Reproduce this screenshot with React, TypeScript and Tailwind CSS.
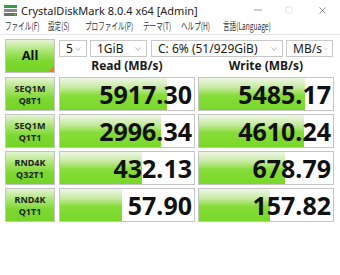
import { ChevronDown, Minus, Square, X } from "lucide-react";

const ROWS: { top: string; bottom: string; read: string; write: string; readPct: number; writePct: number }[] = [
  { top: "SEQ1M", bottom: "Q8T1", read: "5917.30", write: "5485.17", readPct: 80, writePct: 79 },
  { top: "SEQ1M", bottom: "Q1T1", read: "2996.34", write: "4610.24", readPct: 75, writePct: 78 },
  { top: "RND4K", bottom: "Q32T1", read: "432.13", write: "678.79", readPct: 61, writePct: 64 },
  { top: "RND4K", bottom: "Q1T1", read: "57.90", write: "157.82", readPct: 46, writePct: 53 },
];

const MENU: { label: string; width: string }[] = [
  { label: "ファイル(F)", width: "w-[43px]" },
  { label: "設定(S)", width: "w-[37px]" },
  { label: "プロファイル(P)", width: "w-[58px]" },
  { label: "テーマ(T)", width: "w-[38px]" },
  { label: "ヘルプ(H)", width: "w-[42px]" },
  { label: "言語(Language)", width: "w-[70px]" },
];

function Select({ value, width }: { value: string; width: string }) {
  return (
    <div
      className={`${width} h-[17px] flex items-center justify-between border border-[#c8c8c8] bg-white pl-[6px] pr-[3px] text-[12px] leading-none text-[#1a1a1a]`}
    >
      <span>{value}</span>
      <ChevronDown size={10} strokeWidth={1.5} className="text-[#8a8a8a]" />
    </div>
  );
}

function ValueCell({ value, pct }: { value: string; pct: number }) {
  return (
    <div className="relative w-[136px] h-[34px] border border-[#c4c4c4] bg-white overflow-hidden">
      <div
        className="absolute left-0 top-0 bottom-0 bg-[linear-gradient(to_bottom,#eef6e6_0%,#c6eaa0_30%,#86dc38_55%,#78d82a_100%)]"
        style={{ width: `${pct}%` }}
      />
      <div className="relative h-full flex items-center justify-end pr-[2px] text-[25px] font-bold leading-none text-[#111]">
        {value}
      </div>
    </div>
  );
}

export default function App() {
  return (
    <div className="w-[340px] h-[275px] bg-white font-['Noto_Sans','Noto_Sans_CJK_JP',sans-serif] text-[#1a1a1a] overflow-hidden">
      {/* Title bar */}
      <div className="h-[18px] flex items-center">
        <svg width="13" height="11" viewBox="0 0 13 11" className="ml-[4px] mt-[2px]">
          <rect x="0" y="0" width="13" height="3" fill="#2f9e44" />
          <rect x="0" y="4" width="13" height="3" fill="#8a8a8a" />
          <rect x="0" y="8" width="13" height="3" fill="#6e6e6e" />
          <rect x="10" y="9" width="2" height="1" fill="#7ad63a" />
        </svg>
        <span className="ml-[4px] mt-[2px] text-[11px] leading-none text-[#222]">CrystalDiskMark 8.0.4 x64 [Admin]</span>
        <div className="ml-auto flex items-center mt-[2px]">
          <Minus size={12} strokeWidth={1} className="mr-[21px] text-[#333]" />
          <Square size={8} strokeWidth={1} className="mr-[24px] text-[#b0b0b0]" />
          <X size={11} strokeWidth={1.2} className="mr-[12px] text-[#333]" />
        </div>
      </div>

      {/* Menu bar */}
      <div className="h-[17px] flex items-center pl-[5px] text-[10px] leading-none text-[#333] border-b border-[#e6e6e6] font-['Noto_Sans_CJK_JP','Noto_Sans',sans-serif]">
        {MENU.map((m) => (
          <div key={m.label} className={`${m.width} shrink-0`}>
            <span className="inline-block whitespace-nowrap origin-left scale-x-[0.66]">{m.label}</span>
          </div>
        ))}
      </div>

      {/* Body */}
      <div className="pl-[5px] pt-[4px] flex flex-col gap-[3px]">
        <div className="flex gap-[4px]">
          <div className="relative w-[50px] h-[34px] border border-[#c4c4c4] bg-[linear-gradient(to_bottom,#e4f4d4_0%,#a8e470_35%,#7cd830_65%,#76d428_100%)] flex items-center justify-center text-[13px] font-bold text-[#111]">
            All
            <div className="absolute right-0 bottom-0 w-0 h-0 border-l-[6px] border-l-transparent border-b-[6px] border-b-[#f07a1a]" />
          </div>
          <div className="flex flex-col">
            <div className="flex items-center mt-[1px]">
              <Select value="5" width="w-[28px]" />
              <div className="w-[3px]" />
              <Select value="1GiB" width="w-[57px]" />
              <div className="w-[4px]" />
              <Select value="C: 6% (51/929GiB)" width="w-[132px]" />
              <div className="w-[3px]" />
              <Select value="MB/s" width="w-[47px]" />
            </div>
            <div className="flex gap-[3px] h-[17px] items-center text-[12px] font-bold leading-none">
              <div className="w-[136px] text-center">Read (MB/s)</div>
              <div className="w-[136px] text-center">Write (MB/s)</div>
            </div>
          </div>
        </div>

        {ROWS.map((r) => (
          <div key={r.top + r.bottom} className="flex">
            <div className="w-[50px] h-[34px] border border-[#c4c4c4] bg-[linear-gradient(to_bottom,#e4f4d4_0%,#a8e470_35%,#7cd830_65%,#76d428_100%)] flex flex-col items-center justify-center gap-[3px] text-[9px] font-bold leading-none text-[#222]">
              <span>{r.top}</span>
              <span>{r.bottom}</span>
            </div>
            <div className="w-[4px]" />
            <ValueCell value={r.read} pct={r.readPct} />
            <div className="w-[3px]" />
            <ValueCell value={r.write} pct={r.writePct} />
          </div>
        ))}
      </div>
    </div>
  );
}
